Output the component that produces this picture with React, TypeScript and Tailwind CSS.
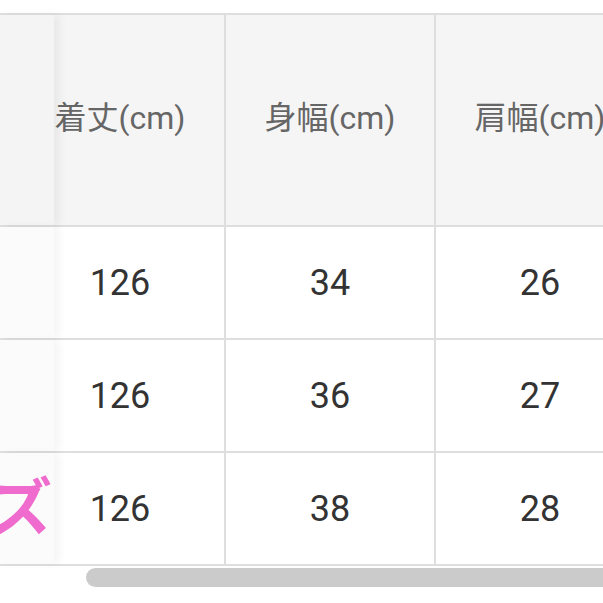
const headers = ["着丈(cm)", "身幅(cm)", "肩幅(cm)"];

const rows = [
  { label: "", values: ["126", "34", "26"] },
  { label: "", values: ["126", "36", "27"] },
  { label: "サイズ", values: ["126", "38", "28"] },
];

const font = { fontFamily: '"Roboto", "Noto Sans CJK JP", sans-serif' };

const App = () => {
  return (
    <div className="w-[603px] h-[603px] bg-white overflow-hidden pt-[13px]" style={font}>
      {/* header row */}
      <div className="flex border-y-2 border-[#dedede] h-[214px] bg-[#f5f5f5]">
        <div className="relative z-10 w-[54px] shrink-0 bg-[#f4f4f4] shadow-[6px_0_8px_rgba(0,0,0,0.05)]" />
        {headers.map((h, i) => (
          <div
            key={h}
            className={`${i === 0 ? "-ml-[38px]" : ""} w-[210px] shrink-0 border-r-2 border-[#dedede] flex items-center justify-center pb-[4px] text-[32px] text-[#666666]`}
          >
            {h}
          </div>
        ))}
      </div>

      {/* body rows */}
      {rows.map((r, idx) => (
        <div key={idx} className="flex border-b-2 border-[#dedede] h-[113px] bg-white">
          <div className="relative z-10 w-[54px] shrink-0 bg-[#fbfbfb] shadow-[6px_0_8px_rgba(0,0,0,0.04)] overflow-hidden flex items-center justify-end pr-[2px]">
            {r.label && (
              <span className="whitespace-nowrap font-bold text-[62px] leading-none text-[#f06bce]">
                {r.label}
              </span>
            )}
          </div>
          {r.values.map((v, i) => (
            <div
              key={i}
              className={`${i === 0 ? "-ml-[38px]" : ""} w-[210px] shrink-0 border-r-2 border-[#dedede] flex items-center justify-center text-[36px] text-[#333333]`}
            >
              {v}
            </div>
          ))}
        </div>
      ))}

      {/* horizontal scrollbar */}
      <div className="mt-[2px] ml-[86px] w-[560px] h-[19px] rounded-full bg-[#cbcbcb]" />
    </div>
  );
};

export default App;
